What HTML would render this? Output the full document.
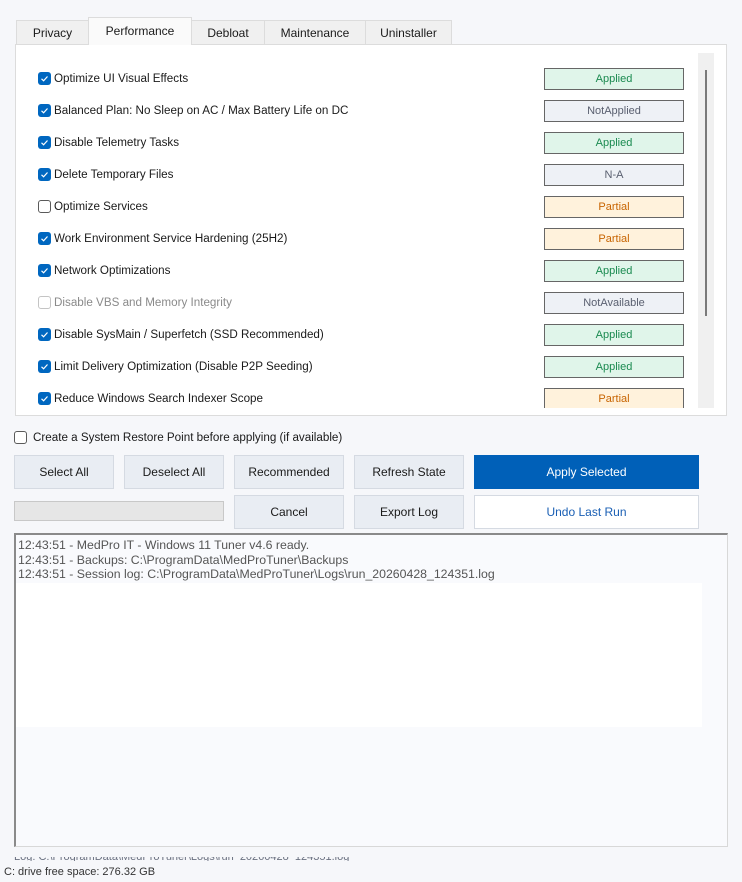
<!DOCTYPE html>
<html><head><meta charset="utf-8"><style>
*{box-sizing:border-box;margin:0;padding:0}
body{width:742px;height:882px;background:#f6f7fa;font-family:"Liberation Sans",sans-serif;font-size:12px;color:#1a1a1a;position:relative;overflow:hidden}
.a{position:absolute}
.tab{position:absolute;top:20px;height:25px;background:#f0f0f0;border:1px solid #dcdcdc;border-bottom:none;text-align:center;line-height:24px;font-size:12px;color:#1a1a1a}
.panel{left:15px;top:44px;width:712px;height:372px;background:#fff;border:1px solid #dcdcdc}
.row{position:absolute;left:38px;height:20px;line-height:20px;font-size:11.65px;white-space:nowrap}
.cb{position:absolute;left:0;top:4px;width:13px;height:13px;border-radius:3px;background:#0067c0}
.cb svg{position:absolute;left:2px;top:2px}
.cb.off{background:#fff;border:1px solid #5a5a5a}
.cb.dis{background:#fff;border:1px solid #c4c4c4}
.row span{position:absolute;left:16px;top:1px}
.st{position:absolute;left:544px;width:140px;height:22px;border:1px solid #666;text-align:center;line-height:21px;font-size:11px}
.ap{background:#e0f5ea;color:#1a8a50}
.na{background:#eef1f6;color:#5a6070}
.pa{background:#fff2dc;color:#c86400}
.btn{position:absolute;background:#e9edf3;border:1px solid #d5dae2;text-align:center;font-size:12px;color:#1a1a1a}
</style></head><body>
<div class="tab" style="left:16px;width:73px">Privacy</div>
<div class="tab" style="left:88px;width:104px;top:17px;height:28px;background:#fafafa;line-height:26px;z-index:2">Performance</div>
<div class="tab" style="left:191px;width:74px">Debloat</div>
<div class="tab" style="left:264px;width:102px">Maintenance</div>
<div class="tab" style="left:365px;width:87px">Uninstaller</div>
<div class="a panel"></div>
<div class="a" style="left:698px;top:53px;width:16px;height:355px;background:#f0f0f0"></div>
<div class="a" style="left:705px;top:70px;width:2px;height:246px;background:#7a7a7a"></div>

<div class="row" style="top:68px"><div class="cb"><svg width="9" height="9" viewBox="0 0 9 9"><path d="M1.5 4.8L3.6 6.8L7.5 2.5" fill="none" stroke="#fff" stroke-width="1.2"/></svg></div><span>Optimize UI Visual Effects</span></div>
<div class="st ap" style="top:68px">Applied</div>
<div class="row" style="top:100px"><div class="cb"><svg width="9" height="9" viewBox="0 0 9 9"><path d="M1.5 4.8L3.6 6.8L7.5 2.5" fill="none" stroke="#fff" stroke-width="1.2"/></svg></div><span>Balanced Plan: No Sleep on AC / Max Battery Life on DC</span></div>
<div class="st na" style="top:100px">NotApplied</div>
<div class="row" style="top:132px"><div class="cb"><svg width="9" height="9" viewBox="0 0 9 9"><path d="M1.5 4.8L3.6 6.8L7.5 2.5" fill="none" stroke="#fff" stroke-width="1.2"/></svg></div><span>Disable Telemetry Tasks</span></div>
<div class="st ap" style="top:132px">Applied</div>
<div class="row" style="top:164px"><div class="cb"><svg width="9" height="9" viewBox="0 0 9 9"><path d="M1.5 4.8L3.6 6.8L7.5 2.5" fill="none" stroke="#fff" stroke-width="1.2"/></svg></div><span>Delete Temporary Files</span></div>
<div class="st na" style="top:164px">N-A</div>
<div class="row" style="top:196px"><div class="cb off"></div><span>Optimize Services</span></div>
<div class="st pa" style="top:196px">Partial</div>
<div class="row" style="top:228px"><div class="cb"><svg width="9" height="9" viewBox="0 0 9 9"><path d="M1.5 4.8L3.6 6.8L7.5 2.5" fill="none" stroke="#fff" stroke-width="1.2"/></svg></div><span>Work Environment Service Hardening (25H2)</span></div>
<div class="st pa" style="top:228px">Partial</div>
<div class="row" style="top:260px"><div class="cb"><svg width="9" height="9" viewBox="0 0 9 9"><path d="M1.5 4.8L3.6 6.8L7.5 2.5" fill="none" stroke="#fff" stroke-width="1.2"/></svg></div><span>Network Optimizations</span></div>
<div class="st ap" style="top:260px">Applied</div>
<div class="row" style="top:292px;color:#8a8a8a"><div class="cb dis"></div><span>Disable VBS and Memory Integrity</span></div>
<div class="st na" style="top:292px">NotAvailable</div>
<div class="row" style="top:324px"><div class="cb"><svg width="9" height="9" viewBox="0 0 9 9"><path d="M1.5 4.8L3.6 6.8L7.5 2.5" fill="none" stroke="#fff" stroke-width="1.2"/></svg></div><span>Disable SysMain / Superfetch (SSD Recommended)</span></div>
<div class="st ap" style="top:324px">Applied</div>
<div class="row" style="top:356px"><div class="cb"><svg width="9" height="9" viewBox="0 0 9 9"><path d="M1.5 4.8L3.6 6.8L7.5 2.5" fill="none" stroke="#fff" stroke-width="1.2"/></svg></div><span>Limit Delivery Optimization (Disable P2P Seeding)</span></div>
<div class="st ap" style="top:356px">Applied</div>
<div class="row" style="top:388px"><div class="cb"><svg width="9" height="9" viewBox="0 0 9 9"><path d="M1.5 4.8L3.6 6.8L7.5 2.5" fill="none" stroke="#fff" stroke-width="1.2"/></svg></div><span>Reduce Windows Search Indexer Scope</span></div>
<div class="a" style="left:544px;top:388px;width:140px;height:20px;overflow:hidden"><div class="st pa" style="left:0;top:0">Partial</div></div>

<div class="row" style="left:14px;top:427px"><div class="cb off"></div><span style="left:19px">Create a System Restore Point before applying (if available)</span></div>

<div class="btn" style="left:14px;top:455px;width:100px;height:34px;line-height:32px">Select All</div>
<div class="btn" style="left:124px;top:455px;width:100px;height:34px;line-height:32px">Deselect All</div>
<div class="btn" style="left:234px;top:455px;width:110px;height:34px;line-height:32px">Recommended</div>
<div class="btn" style="left:354px;top:455px;width:110px;height:34px;line-height:32px">Refresh State</div>
<div class="btn" style="left:474px;top:455px;width:225px;height:34px;line-height:32px;background:#0060b8;border-color:#0060b8;color:#fff">Apply Selected</div>
<div class="a" style="left:14px;top:501px;width:210px;height:20px;background:#e6e6e6;border:1px solid #c8c8c8"></div>
<div class="btn" style="left:234px;top:495px;width:110px;height:34px;line-height:32px">Cancel</div>
<div class="btn" style="left:354px;top:495px;width:110px;height:34px;line-height:32px">Export Log</div>
<div class="btn" style="left:474px;top:495px;width:225px;height:34px;line-height:32px;background:#fff;color:#1a5fb4">Undo Last Run</div>

<div class="a" style="left:14px;top:533px;width:714px;height:314px;background:#f9fafd;border:1px solid #d8d8d8;border-top:2px solid #8a8a8a;border-left:2px solid #8a8a8a"></div>
<div class="a" style="left:16px;top:583px;width:686px;height:144px;background:#fff"></div>
<div class="a" style="left:18px;top:538px;font-size:12.3px;line-height:14.7px;color:#555;white-space:nowrap">12:43:51 - MedPro IT - Windows 11 Tuner v4.6 ready.<br>12:43:51 - Backups: C:\ProgramData\MedProTuner\Backups<br>12:43:51 - Session log: C:\ProgramData\MedProTuner\Logs\run_20260428_124351.log</div>

<div class="a" style="left:14px;top:857px;height:4px;overflow:hidden;width:400px"><div style="margin-top:-6px;font-size:11px;color:#6a7080;white-space:nowrap">Log: C:\ProgramData\MedProTuner\Logs\run_20260428_124351.log</div></div>
<div class="a" style="left:4px;top:866px;font-size:11px;color:#333">C: drive free space: 276.32 GB</div>
</body></html>
